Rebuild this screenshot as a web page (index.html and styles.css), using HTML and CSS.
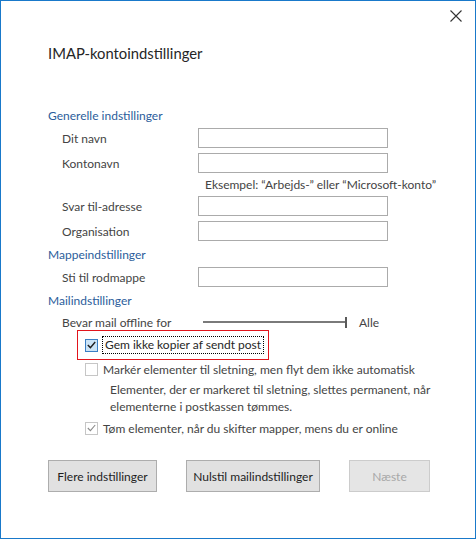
FILE: index.html
```html
<!DOCTYPE html>
<html lang="da">
  <head>
    <meta charset="UTF-8" />
    <title>IMAP-kontoindstillinger</title>
    <link rel="stylesheet" href="styles.css">
  </head>
  <body>
    <div class="dialog">
      <div class="title-bar">
        <button class="close" title="Luk">
          <svg width="12" height="12" viewBox="0 0 12 12">
            <path d="M0.5 0.5 L11.5 11.5 M11.5 0.5 L0.5 11.5" stroke="#333" stroke-width="1.1" fill="none" />
          </svg>
        </button>
      </div>

      <div class="content">
        <h1 class="title">IMAP-kontoindstillinger</h1>

        <h2 class="section first">Generelle indstillinger</h2>
        <div class="fields general">
          <label>Dit navn</label>
          <input type="text" />
          <label>Kontonavn</label>
          <input type="text" />
          <span></span>
          <span class="hint">Eksempel: “Arbejds-” eller “Microsoft-konto”</span>
          <label>Svar til-adresse</label>
          <input type="text" />
          <label>Organisation</label>
          <input type="text" />
        </div>

        <h2 class="section">Mappeindstillinger</h2>
        <div class="fields">
          <label>Sti til rodmappe</label>
          <input type="text" />
        </div>

        <h2 class="section">Mailindstillinger</h2>
        <div class="slider-row">
          <span class="slider-label">Bevar mail offline for</span>
          <span class="slider"><span class="track"></span><span class="thumb"></span></span>
          <span class="slider-value">Alle</span>
        </div>

        <div class="check focused">
          <span class="box checked">
            <svg width="9" height="8" viewBox="0 0 9 8"><path d="M0.8 4 L3.4 6.6 L8.2 1" stroke="#1e1e1e" stroke-width="1.4" fill="none" /></svg>
          </span>
          <span class="check-text">Gem ikke kopier af sendt post</span>
        </div>

        <div class="check">
          <span class="box disabled"></span>
          <span class="check-text">Markér elementer til sletning, men flyt dem ikke automatisk</span>
        </div>
        <p class="note">Elementer, der er markeret til sletning, slettes permanent, når elementerne i postkassen tømmes.</p>

        <div class="check last">
          <span class="box disabled">
            <svg width="9" height="8" viewBox="0 0 9 8"><path d="M0.8 4 L3.4 6.6 L8.2 1" stroke="#8a8a8a" stroke-width="1.1" fill="none" /></svg>
          </span>
          <span class="check-text">Tøm elementer, når du skifter mapper, mens du er online</span>
        </div>

        <div class="actions">
          <button class="btn more">Flere indstillinger</button>
          <button class="btn reset">Nulstil mailindstillinger</button>
          <button class="btn next" disabled>Næste</button>
        </div>
      </div>
    </div>
  </body>
</html>
```

FILE: styles.css
```css
* {
  box-sizing: border-box;
}

body {
  margin: 0;
  background: #fff;
  font-family: Lato, "Noto Sans", sans-serif;
  font-size: 12px;
  color: #444;
}

.dialog {
  width: 476px;
  height: 539px;
  border: 1px solid #1979ca;
  background: #fff;
}

.title-bar {
  display: flex;
  justify-content: flex-end;
  height: 30px;
  padding: 8px 12px 0 0;
}

.close {
  width: 14px;
  height: 14px;
  padding: 1px;
  border: none;
  background: none;
  display: flex;
}

.content {
  padding-left: 47px;
}

.title {
  margin: 11px 0 0;
  font-size: 14.8px;
  font-weight: normal;
  line-height: 22px;
  color: #262626;
}

.section {
  margin: 6px 0 4px;
  font-size: 12px;
  font-weight: normal;
  line-height: 16px;
  color: #2b5d9b;
}

.section.first {
  margin-top: 44px;
}

.fields {
  display: grid;
  grid-template-columns: 136px 190px;
  grid-auto-rows: 20px;
  row-gap: 5px;
  padding-left: 14px;
  align-items: center;
}

.fields.general {
  grid-template-rows: 20px 20px 13px 20px 20px;
}

.fields .hint {
  height: 13px;
  line-height: 13px;
  padding-left: 7px;
  white-space: nowrap;
}

.fields input {
  width: 190px;
  height: 20px;
  margin: 0;
  border: 1px solid #ababab;
  background: #fff;
}

.slider-row {
  display: flex;
  align-items: center;
  height: 16px;
  margin-top: 5px;
  padding-left: 14px;
}

.slider-label {
  width: 141px;
}

.slider {
  display: flex;
  align-items: center;
  width: 144px;
}

.track {
  flex: 1;
  height: 2px;
  background: #7a7a7a;
}

.thumb {
  width: 2px;
  height: 11px;
  background: #5a5a5a;
}

.slider-value {
  margin-left: 12px;
}

.check {
  display: flex;
  align-items: center;
  gap: 5px;
  height: 16px;
  margin-left: 37px;
  white-space: nowrap;
}

.check.focused {
  width: 192px;
  height: 30px;
  margin-left: 29px;
  padding-left: 7px;
  border: 1px solid #e2141c;
}

.check.focused .check-text {
  padding: 0 2px;
  line-height: 16px;
  outline: 1px dotted #000;
  color: #262626;
}

.check.focused + .check {
  margin-top: 1px;
}

.box {
  flex: none;
  display: flex;
  align-items: center;
  justify-content: center;
  width: 13px;
  height: 13px;
  border: 1px solid #c6c6c6;
  background: #fff;
}

.box.checked {
  border-color: #3a7ec4;
  background: #cce4f7;
}

.note {
  margin: 4px 0 0 62px;
  width: 330px;
  line-height: 17px;
}

.check.last {
  margin-top: 5px;
}

.actions {
  display: flex;
  gap: 29px;
  margin-top: 24px;
}

.btn {
  height: 32px;
  padding: 0;
  border: 1px solid #adadad;
  background: #e1e1e1;
  font-family: inherit;
  font-size: 12px;
  color: #1e1e1e;
}

.btn.more {
  width: 109px;
}

.btn.reset {
  width: 134px;
}

.btn.next {
  width: 81px;
  border-color: #cccccc;
  background: #e5e5e5;
  color: #a8a8a8;
}
```
